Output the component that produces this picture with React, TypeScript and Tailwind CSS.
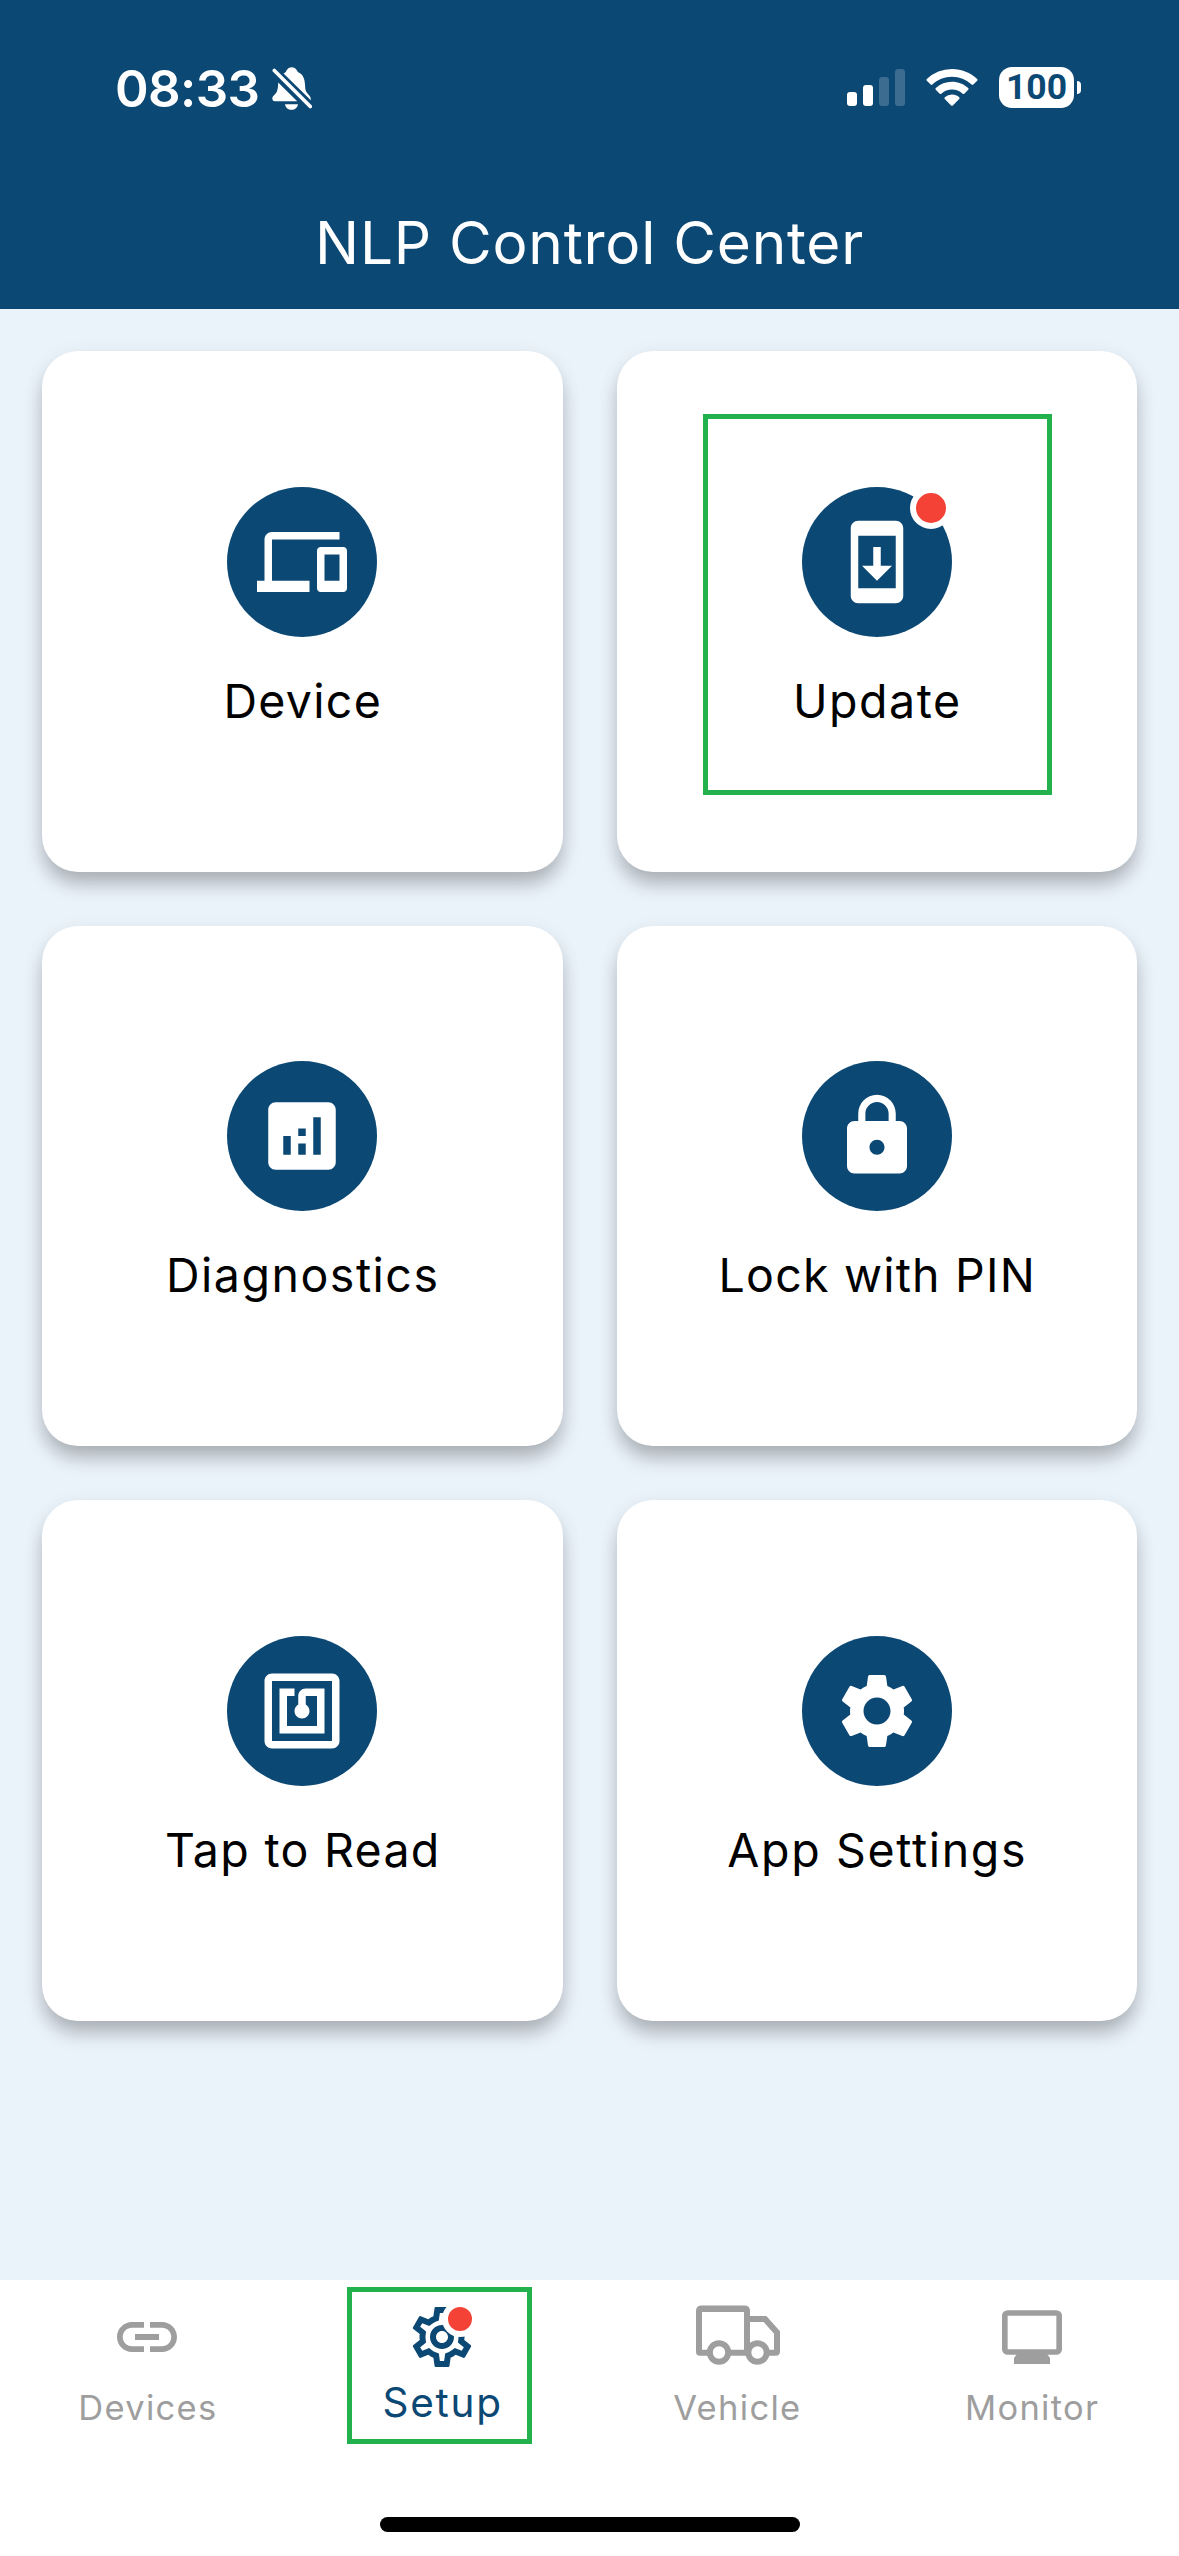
import React from "react";
import { MdDevices, MdSystemUpdate, MdAnalytics, MdLock, MdNfc, MdSettings, MdOutlineSettings, MdLink } from "react-icons/md";

type Tile = { label: string; icon: React.ReactNode; tracking: string; badge?: boolean };

const tiles: Tile[] = [
  { label: "Device", icon: <MdDevices size={90} />, tracking: "tracking-[1.300px]" },
  { label: "Update", icon: <MdSystemUpdate size={90} />, tracking: "tracking-[1.500px]", badge: true },
  { label: "Diagnostics", icon: <MdAnalytics size={90} />, tracking: "tracking-[1.500px]" },
  { label: "Lock with PIN", icon: <MdLock size={90} />, tracking: "tracking-[1.200px]" },
  { label: "Tap to Read", icon: <MdNfc size={90} />, tracking: "tracking-[1.300px]" },
  { label: "App Settings", icon: <MdSettings size={90} />, tracking: "tracking-[1.650px]" },
];

function StatusBar() {
  return (
    <div className="flex h-[177px] items-start justify-between pl-[115px] pr-[98px] pt-[67px]">
      <div className="flex items-start">
        <span className="w-[157px] whitespace-nowrap text-[51px] font-semibold leading-[43px] tracking-[-0.600px]">08:33</span>
        <svg width="40" height="43" viewBox="0 0 40 43" fill="none">
          <path d="M11.500 6.500C13 5.800 14 5 14.500 3.500 16.500-1 23-1 25 3.500c.4 1.300 1.200 2 2.600 2.600C32 8.500 33 14 33.200 20.500c.1 3 1 4.500 2.800 6.500 2.200 2.300 3 3.500 2.800 6.300z" fill="white" />
          <path d="M6.200 15.500 25.200 34.300H3c-3 0-3.500-3.500-1.500-5.500C4.500 25.800 6 24.500 6.200 15.500Z" fill="white" />
          <path d="M13 37.200h13c-.5 3.500-3 5.500-6.500 5.500S13.500 40.700 13 37.200Z" fill="white" />
          <path d="m2.300 3.500 36 36" stroke="#0c4874" strokeWidth="8" />
          <path d="m2.300 3.500 36 36" stroke="white" strokeWidth="3.600" strokeLinecap="round" />
        </svg>
      </div>
      <div className="flex items-start">
        <div className="mt-[2px] flex h-[37px] items-end gap-[6px]">
          <div className="h-[14px] w-[10px] rounded-[3px] bg-white" />
          <div className="h-[21px] w-[10px] rounded-[3px] bg-white" />
          <div className="h-[29px] w-[10px] rounded-[3px] bg-white/20" />
          <div className="h-[37px] w-[10px] rounded-[3px] bg-white/20" />
        </div>
        <svg className="ml-[21px] mt-[2px]" width="52" height="37" viewBox="0 0 52 37" fill="white">
          <path d="M26 0c9.700 0 18.500 3.800 25.200 10 .5.500.5 1.200 0 1.700l-3.900 3.900c-.5.500-1.200.5-1.700 0A28.600 28.600 0 0 0 26 7.800c-7.600 0-14.500 3-19.600 7.800-.5.500-1.200.5-1.700 0L.8 11.700c-.5-.5-.5-1.200 0-1.700A37 37 0 0 1 26 0Z" />
          <path d="M26 12.800c6.200 0 11.900 2.400 16.200 6.300.5.500.5 1.200 0 1.700l-3.900 3.900c-.5.500-1.200.5-1.700 0a15.800 15.800 0 0 0-21.200 0c-.5.500-1.200.5-1.700 0l-3.900-3.900c-.5-.5-.5-1.200 0-1.700A24 24 0 0 1 26 12.800Z" />
          <path d="M26 25.500c2.800 0 5.300 1 7.200 2.700.5.500.5 1.200 0 1.700l-6.400 6.500c-.5.500-1.200.5-1.700 0L18.800 29.900c-.5-.5-.5-1.200 0-1.700a10.800 10.800 0 0 1 7.200-2.700Z" />
        </svg>
        <div className="ml-[21px] flex h-[41px] w-[75px] items-center justify-center rounded-[13px] bg-white pt-[1px] font-[Roboto,sans-serif] text-[35.500px] font-bold leading-none text-[#0c4874]">
          100
        </div>
        <div className="ml-[3px] mt-[14px] h-[13px] w-[4px] rounded-r-full bg-white" />
      </div>
    </div>
  );
}

function TileCard({ label, icon, tracking, badge }: Tile) {
  return (
    <div className="relative flex h-[520.500px] flex-col items-center rounded-[36px] bg-white pt-[135.500px] shadow-[0_13px_19px_-2px_rgba(0,0,0,0.27),0_3px_24px_rgba(0,0,0,0.04)]">
      <div className="relative flex size-[150px] items-center justify-center rounded-full bg-[#0c4874] text-white">
        {icon}
        {badge && <span className="absolute right-0 top-0 size-[42px] rounded-full border-[6px] border-white bg-[#f44336]" />}
      </div>
      <span className={`mt-[35px] whitespace-nowrap pl-[1px] text-[46.500px] leading-[58px] text-black ${tracking}`}>{label}</span>
      {badge && <span className="absolute left-[86px] top-[63px] h-[381px] w-[349px] border-[5px] border-[#22b14c]" />}
    </div>
  );
}

function TruckIcon() {
  return (
    <svg className="mb-[4px] ml-[2px]" width="84" height="60" viewBox="0 0 84 60" fill="none" stroke="#9e9e9e" strokeWidth="6">
      <path d="M12 47.700H4q-1 0-1-1V6q0-2.500 2.500-2.500h43Q51 3.500 51 6v41.700" />
      <path d="M5 4h44M34 47.700h18M52 14h17l12 13.500v18.700q0 1.500-1.500 1.500H73" />
      <circle cx="23" cy="47.500" r="9.200" fill="white" />
      <circle cx="61.500" cy="47.500" r="9.200" fill="white" />
    </svg>
  );
}

function MonitorIcon() {
  return (
    <svg width="60" height="54" viewBox="0 0 60 54" fill="none">
      <rect x="2.800" y="3" width="54.400" height="39" rx="3" stroke="#9e9e9e" strokeWidth="5.700" />
      <path d="M15 44h30l3 4v6H12v-6z" fill="#9e9e9e" />
    </svg>
  );
}

function NavItem({ label, icon, active }: { label: string; icon: React.ReactNode; active?: boolean }) {
  return (
    <div className={active ? "relative flex flex-col items-center text-[#0c4874]" : "relative flex flex-col items-center text-[#9e9e9e]"}>
      <div className="mt-[21px] flex h-[72px] items-center">{icon}</div>
      <span className={active ? "mt-[5px] pl-[1px] text-[40.500px] leading-[50px] tracking-[1.700px]" : "mt-[13px] pl-[1px] text-[34.500px] leading-[44px] tracking-[1.300px]"}>{label}</span>
      {active && <span className="absolute left-[52px] top-[7px] h-[157px] w-[185px] border-[5px] border-[#22b14c]" />}
    </div>
  );
}

export default function App() {
  return (
    <div className="flex h-[2556px] w-[1179px] flex-col overflow-hidden bg-[#eaf2fa] font-['Inter',sans-serif]">
      <header className="h-[309px] shrink-0 bg-[#0c4874] text-white">
        <StatusBar />
        <h1 className="text-center text-[58.500px] font-normal leading-[132px] tracking-[0.750px]">NLP Control Center</h1>
      </header>
      <main className="grid flex-1 grid-cols-2 content-start gap-[54px] px-[42px] pt-[42px]">
        {tiles.map((t) => (
          <TileCard key={t.label} {...t} />
        ))}
      </main>
      <nav className="flex h-[276px] shrink-0 flex-col bg-white">
        <div className="grid h-[237px] grid-cols-4">
          <NavItem label="Devices" icon={<MdLink size={72} />} />
          <NavItem
            label="Setup"
            active
            icon={
              <span className="relative">
                <MdOutlineSettings size={72} />
                <span className="absolute right-[6px] top-[6px] size-[24px] rounded-full bg-[#f44336] shadow-[0_0_0_6px_white]" />
              </span>
            }
          />
          <NavItem label="Vehicle" icon={<TruckIcon />} />
          <NavItem label="Monitor" icon={<MonitorIcon />} />
        </div>
        <div className="mx-auto h-[15px] w-[420px] rounded-full bg-black" />
      </nav>
    </div>
  );
}
